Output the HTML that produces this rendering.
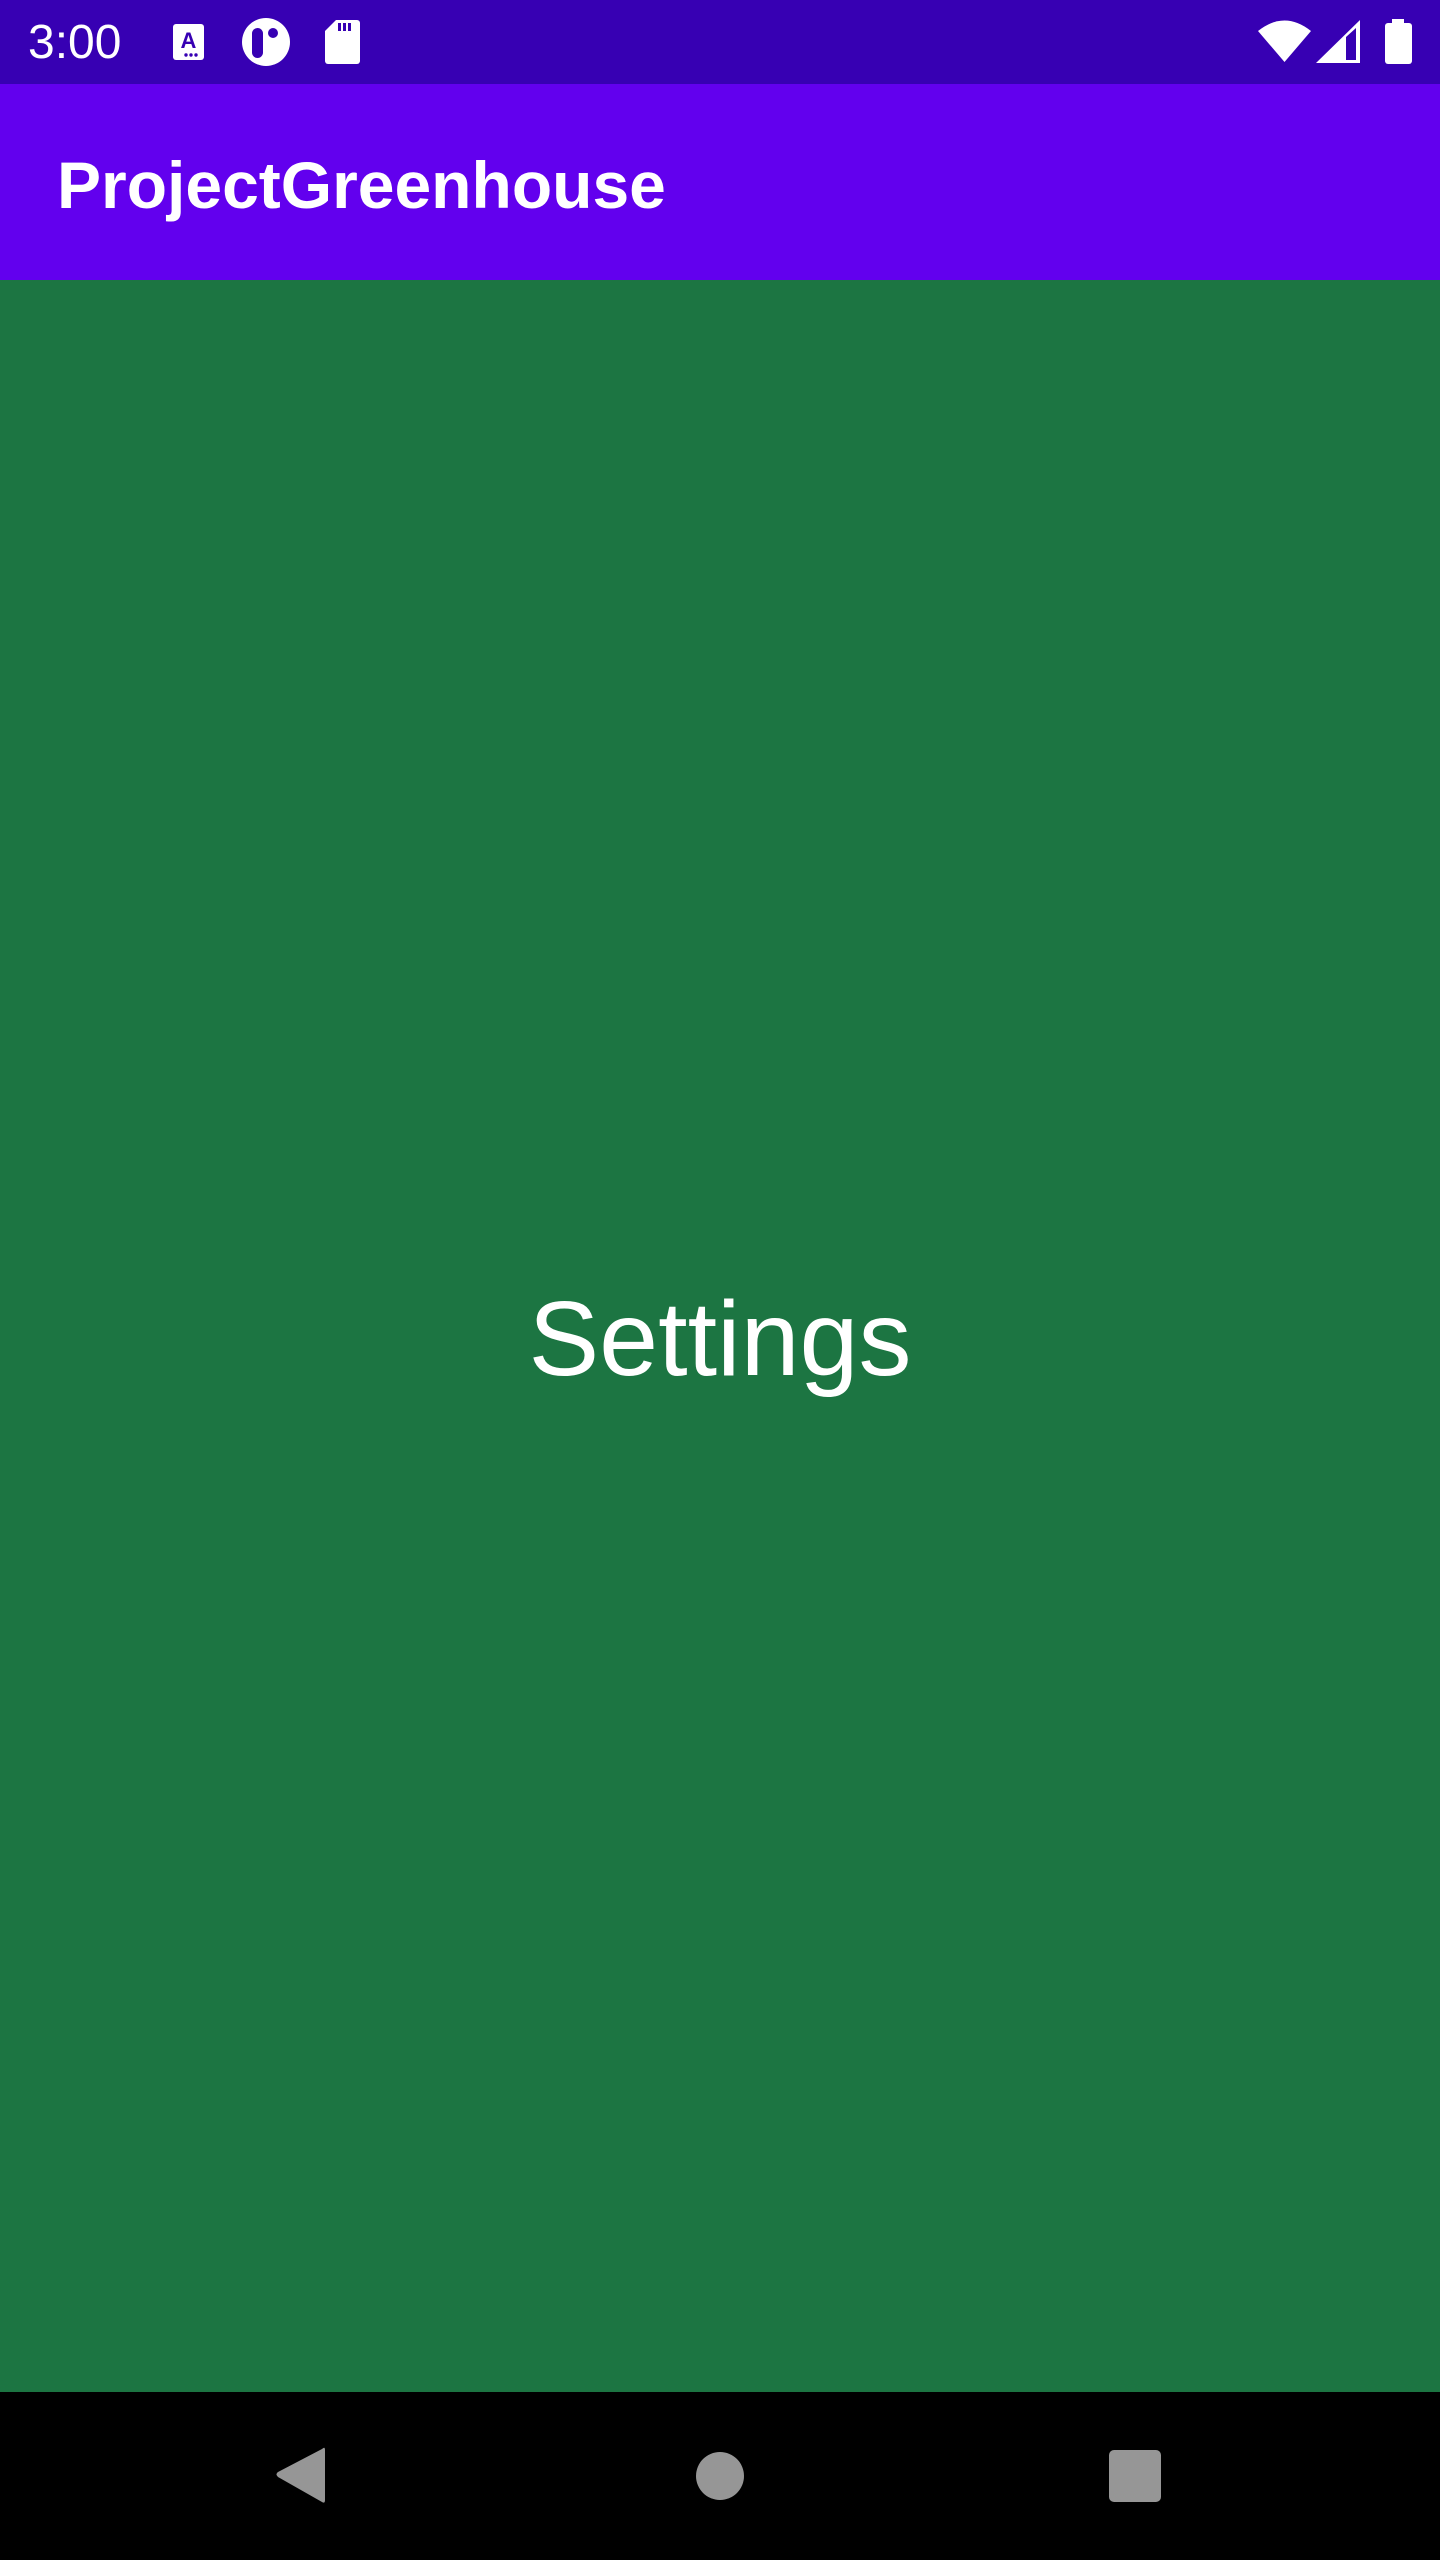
<!DOCTYPE html>
<html><head><meta charset="utf-8"><style>
html,body{margin:0;padding:0;width:1440px;height:2560px;overflow:hidden;font-family:"Liberation Sans",sans-serif;}
.sb{position:absolute;left:0;top:0;width:1440px;height:84px;background:#3700B3;}
.ab{position:absolute;left:0;top:84px;width:1440px;height:196px;background:#6200EE;}
.main{position:absolute;left:0;top:280px;width:1440px;height:2112px;background:#1C7542;}
.nav{position:absolute;left:0;top:2392px;width:1440px;height:168px;background:#000;}
.t{position:absolute;color:#fff;white-space:nowrap;}
</style></head><body>
<div class="sb">
<div class="t" style="left:28px;top:12px;font-size:48px;line-height:62px;">3:00</div>
<svg width="1440" height="84" style="position:absolute;left:0;top:0">
<rect x="173" y="24" width="31" height="36" rx="3" fill="#fff"/>
<text x="188.5" y="48" font-family="Liberation Sans" font-weight="bold" font-size="22" fill="#3700B3" text-anchor="middle">A</text>
<circle cx="186" cy="55" r="1.7" fill="#3700B3"/><circle cx="191" cy="55" r="1.7" fill="#3700B3"/><circle cx="196" cy="55" r="1.7" fill="#3700B3"/>
<circle cx="266" cy="42" r="24" fill="#fff"/>
<rect x="252" y="28" width="11" height="30" rx="5.5" fill="#3700B3"/>
<circle cx="273" cy="33" r="5" fill="#3700B3"/>
<path d="M336 20 H357 a3 3 0 0 1 3 3 V61 a3 3 0 0 1 -3 3 H328 a3 3 0 0 1 -3 -3 V31 Z" fill="#fff"/>
<rect x="338" y="23" width="3" height="8" fill="#3700B3"/><rect x="343" y="23" width="3" height="8" fill="#3700B3"/><rect x="348" y="23" width="3" height="8" fill="#3700B3"/>
<path d="M1258 31 Q1284.5 10 1311 31 L1284.5 62 Z" fill="#fff"/>
<path d="M1316 63 L1360 20 V63 Z" fill="#fff"/>
<path d="M1346 60 V37 L1356 28 V60 Z" fill="#3700B3"/>
<rect x="1392" y="19" width="12" height="5" fill="#fff"/>
<rect x="1385" y="23" width="27" height="41" rx="3" fill="#fff"/>
</svg>
</div>
<div class="ab"><div class="t" style="left:57px;top:61px;font-size:66px;line-height:80px;font-weight:bold;">ProjectGreenhouse</div></div>
<div class="main"><div class="t" style="left:0;width:1440px;text-align:center;top:999px;font-size:106px;line-height:120px;">Settings</div></div>
<div class="nav">
<svg width="1440" height="168" style="position:absolute;left:0;top:0">
<path d="M322 57 Q325 54 325 58 V108 Q325 112 322 110 L278 85 Q275 82 278 80 Z" fill="#969696"/>
<circle cx="720" cy="84" r="24" fill="#969696"/>
<rect x="1109" y="58" width="52" height="52" rx="5" fill="#969696"/>
</svg>
</div>
</body></html>
